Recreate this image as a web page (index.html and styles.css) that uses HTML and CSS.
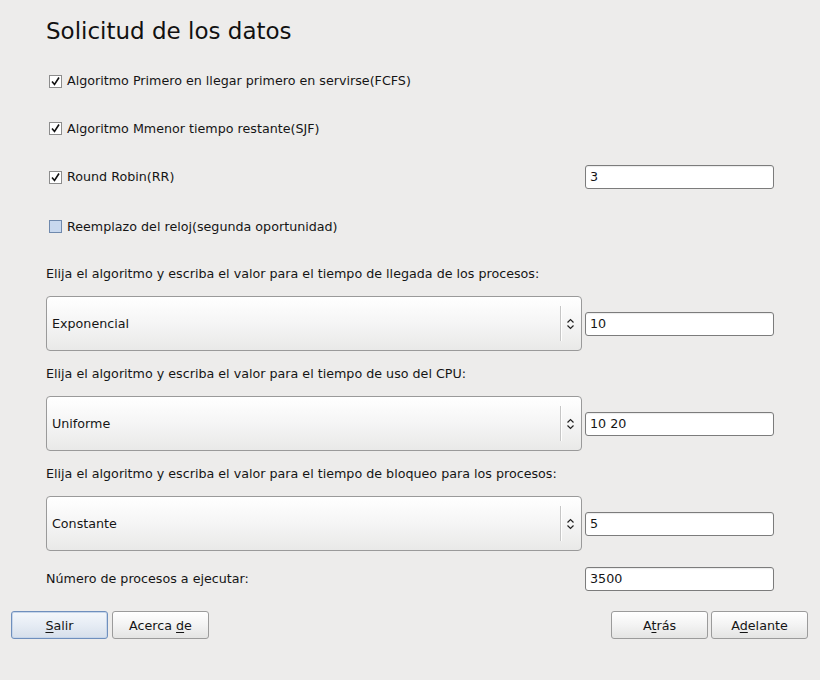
FILE: index.html
```html
<!DOCTYPE html>
<html lang="es">
<head>
<meta charset="utf-8">
<title>Solicitud de los datos</title>
<link rel="stylesheet" href="styles.css">
</head>
<body>
<div class="window">
  <div class="content">
    <h1 class="title">Solicitud de los datos</h1>

    <div class="check-row r1">
      <span class="check checked"><svg viewBox="0 0 13 13" width="13" height="13"><path d="M3 6.5 L5.5 9.5 L10 2.5" fill="none" stroke="#111" stroke-width="1.6"/></svg></span>
      <span class="label">Algoritmo Primero en llegar primero en servirse(FCFS)</span>
    </div>
    <div class="check-row r2">
      <span class="check checked"><svg viewBox="0 0 13 13" width="13" height="13"><path d="M3 6.5 L5.5 9.5 L10 2.5" fill="none" stroke="#111" stroke-width="1.6"/></svg></span>
      <span class="label">Algoritmo Mmenor tiempo restante(SJF)</span>
    </div>
    <div class="check-row r3">
      <span class="check checked"><svg viewBox="0 0 13 13" width="13" height="13"><path d="M3 6.5 L5.5 9.5 L10 2.5" fill="none" stroke="#111" stroke-width="1.6"/></svg></span>
      <span class="label">Round Robin(RR)</span>
      <div class="entry push">3</div>
    </div>
    <div class="check-row r4">
      <span class="check unchecked"></span>
      <span class="label">Reemplazo del reloj(segunda oportunidad)</span>
    </div>

    <div class="section first">
      <div class="prompt">Elija el algoritmo y escriba el valor para el tiempo de llegada de los procesos:</div>
      <div class="combo-row">
        <div class="combo">
          <span class="combo-text">Exponencial</span>
          <span class="combo-sep"></span>
          <svg class="combo-arrow" viewBox="0 0 9 12" width="9" height="12"><path d="M1.5 4.5 L4.5 1.5 L7.5 4.5 M1.5 7.5 L4.5 10.5 L7.5 7.5" fill="none" stroke="#222" stroke-width="1.2"/></svg>
        </div>
        <div class="entry">10</div>
      </div>
    </div>

    <div class="section">
      <div class="prompt">Elija el algoritmo y escriba el valor para el tiempo de uso del CPU:</div>
      <div class="combo-row">
        <div class="combo">
          <span class="combo-text">Uniforme</span>
          <span class="combo-sep"></span>
          <svg class="combo-arrow" viewBox="0 0 9 12" width="9" height="12"><path d="M1.5 4.5 L4.5 1.5 L7.5 4.5 M1.5 7.5 L4.5 10.5 L7.5 7.5" fill="none" stroke="#222" stroke-width="1.2"/></svg>
        </div>
        <div class="entry">10 20</div>
      </div>
    </div>

    <div class="section">
      <div class="prompt">Elija el algoritmo y escriba el valor para el tiempo de bloqueo para los procesos:</div>
      <div class="combo-row">
        <div class="combo">
          <span class="combo-text">Constante</span>
          <span class="combo-sep"></span>
          <svg class="combo-arrow" viewBox="0 0 9 12" width="9" height="12"><path d="M1.5 4.5 L4.5 1.5 L7.5 4.5 M1.5 7.5 L4.5 10.5 L7.5 7.5" fill="none" stroke="#222" stroke-width="1.2"/></svg>
        </div>
        <div class="entry">5</div>
      </div>
    </div>

    <div class="number-row">
      <span class="label">Número de procesos a ejecutar:</span>
      <div class="entry push">3500</div>
    </div>
  </div>

  <div class="buttons">
    <div class="btn-group">
      <button class="btn default"><span><u>S</u>alir</span></button>
      <button class="btn"><span>Acerca <u>d</u>e</span></button>
    </div>
    <div class="btn-group right">
      <button class="btn"><span>A<u>t</u>rás</span></button>
      <button class="btn"><span>A<u>d</u>elante</span></button>
    </div>
  </div>
</div>
</body>
</html>
```

FILE: styles.css
```css
* { box-sizing: border-box; }

html, body {
  margin: 0;
  padding: 0;
  background: #edeceb;
}

body {
  width: 820px;
  height: 680px;
  font-family: "DejaVu Sans", "Liberation Sans", sans-serif;
  font-size: 12.7px;
  color: #151515;
}

.window {
  display: flex;
  flex-direction: column;
}

.content {
  padding: 0 46px;
  display: flex;
  flex-direction: column;
}

.title {
  margin: 0;
  height: 57px;
  padding-top: 15px;
  font-size: 23px;
  font-weight: normal;
  line-height: 32px;
  color: #111;
}

.check-row {
  display: flex;
  align-items: center;
  padding-left: 3px;
}

.r1 { height: 48px; }
.r2 { height: 47px; }
.r3 { height: 50px; }
.r4 { height: 49px; }

.check {
  width: 13px;
  height: 13px;
  border: 1px solid #8c8c8c;
  background: #fff;
  display: inline-flex;
  margin-right: 5px;
  flex: none;
}

.check svg { margin: -1px; }

.check.unchecked {
  background: #c8d8ee;
  border-color: #6f89ad;
}

.label {
  line-height: 16px;
}

.push { margin-left: auto; }

.entry {
  width: 189px;
  height: 24px;
  background: #fff;
  border: 1px solid #7c7c7c;
  border-radius: 3px;
  padding: 0 4px 1px;
  display: flex;
  align-items: center;
  color: #151515;
  box-shadow: inset 0 1px 1px rgba(0,0,0,0.08);
  flex: none;
}

.section.first { margin-top: 12px; }

.prompt {
  height: 22px;
  line-height: 22px;
  margin-bottom: 11px;
}

.combo-row {
  display: flex;
  align-items: center;
  gap: 3px;
  margin-bottom: 12px;
}

.combo {
  flex: 1;
  height: 55px;
  border: 1px solid #9a9a9a;
  border-radius: 4px;
  background: linear-gradient(#ffffff, #f6f6f6 45%, #e9e9e8);
  display: flex;
  align-items: center;
  padding-left: 5px;
  padding-right: 6px;
}

.combo-text { flex: 1; }

.combo-sep {
  width: 1px;
  align-self: stretch;
  margin: 9px 0;
  background: #c6c6c6;
  box-shadow: 1px 0 0 #ffffff;
}

.combo-arrow {
  margin-left: 5px;
}

.number-row {
  margin-top: 4px;
  height: 24px;
  display: flex;
  align-items: center;
}

.buttons {
  margin-top: 20px;
  padding: 0 12px 0 11px;
  display: flex;
  justify-content: space-between;
}

.btn-group {
  display: flex;
  gap: 4px;
}

.btn-group.right { gap: 3px; }

.btn {
  width: 97px;
  height: 28px;
  border: 1px solid #9b9b9b;
  border-radius: 3px;
  background: linear-gradient(#ffffff, #f3f3f3 50%, #e4e4e3);
  font-family: "DejaVu Sans", "Liberation Sans", sans-serif;
  font-size: 12.7px;
  color: #151515;
  padding: 0;
  display: flex;
  align-items: center;
  justify-content: center;
}

.btn u { text-underline-offset: 2px; }

.btn.default {
  border-color: #6f8fbd;
  background: linear-gradient(#f4f7fb, #e6ecf4 50%, #d6dfeb);
  box-shadow: inset 0 0 0 1px #c7d6ea;
}
```
